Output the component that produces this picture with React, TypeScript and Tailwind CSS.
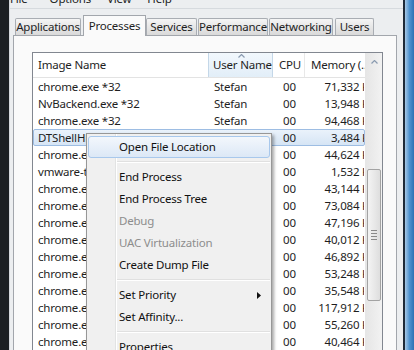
import React from "react";

type Row = { name: string; user: string; mem: string; selected?: boolean };

const rows: Row[] = [
  { name: "chrome.exe *32", user: "Stefan", mem: "71,332 K" },
  { name: "NvBackend.exe *32", user: "Stefan", mem: "13,948 K" },
  { name: "chrome.exe *32", user: "Stefan", mem: "94,468 K" },
  { name: "DTShellHlp.exe", user: "Stefan", mem: "3,484 K", selected: true },
  { name: "chrome.exe", user: "Stefan", mem: "44,624 K" },
  { name: "vmware-tray.exe", user: "Stefan", mem: "1,532 K" },
  { name: "chrome.exe", user: "Stefan", mem: "43,144 K" },
  { name: "chrome.exe", user: "Stefan", mem: "73,084 K" },
  { name: "chrome.exe", user: "Stefan", mem: "47,196 K" },
  { name: "chrome.exe", user: "Stefan", mem: "40,012 K" },
  { name: "chrome.exe", user: "Stefan", mem: "46,892 K" },
  { name: "chrome.exe", user: "Stefan", mem: "53,248 K" },
  { name: "chrome.exe", user: "Stefan", mem: "35,548 K" },
  { name: "chrome.exe", user: "Stefan", mem: "117,912 K" },
  { name: "chrome.exe", user: "Stefan", mem: "55,260 K" },
  { name: "chrome.exe", user: "Stefan", mem: "40,464 K" },
];

const tabs = [
  { label: "Applications", cls: "w-[66px]" },
  { label: "Processes", cls: "w-[63px] ml-[2px]", active: true },
  { label: "Services", cls: "w-[51px]" },
  { label: "Performance", cls: "w-[70px] ml-px" },
  { label: "Networking", cls: "w-[64px] ml-px" },
  { label: "Users", cls: "w-[39px] ml-[2px]" },
];

type MenuEntry =
  | { sep: true }
  | { label: string; hot?: boolean; disabled?: boolean; sub?: boolean; sep?: false };

const menu: MenuEntry[] = [
  { label: "Open File Location", hot: true },
  { sep: true },
  { label: "End Process" },
  { label: "End Process Tree" },
  { label: "Debug", disabled: true },
  { label: "UAC Virtualization", disabled: true },
  { label: "Create Dump File" },
  { sep: true },
  { label: "Set Priority", sub: true },
  { label: "Set Affinity..." },
  { sep: true },
  { label: "Properties" },
];

const Chevron = ({ className }: { className?: string }) => (
  <svg className={className} width="7" height="4" viewBox="0 0 7 4">
    <path d="M0.5 3.5 L3.5 0.5 L6.5 3.5" fill="none" stroke="#8a9bb0" strokeWidth="1.2" />
  </svg>
);

const ContextMenu = () => (
  <div className="absolute left-[86px] top-[133px] z-20 w-[186px] border border-[#979797] bg-[#f0f0f0] px-px py-[2px] shadow-[2px_2px_3px_rgba(0,0,0,0.35)]">
    <div className="absolute bottom-0 left-[28px] top-0 w-px bg-[#e2e3e3]" />
    <div className="absolute bottom-0 left-[29px] top-0 w-px bg-white" />
    {menu.map((m, i) =>
      m.sep ? (
        <div key={i} className="relative flex h-[8px] flex-col justify-center pl-[29px]">
          <div className="h-px bg-[#e0e0e0]" />
          <div className="h-px bg-white" />
        </div>
      ) : (
        <div
          key={i}
          className={
            m.hot
              ? "relative flex h-[22px] items-center rounded-[3px] border border-[#a8c8ec] bg-gradient-to-b from-[#f3f7fc] to-[#dce8f6] pl-[30px]"
              : "relative flex h-[22px] items-center border border-transparent pl-[30px]"
          }
        >
          <span className={m.disabled ? "text-[#8d8d8d]" : "text-[#111]"}>{m.label}</span>
          {m.sub && (
            <svg className="ml-auto mr-[8px]" width="4" height="7" viewBox="0 0 4 7">
              <path d="M0 0 L4 3.5 L0 7 Z" fill="#111" />
            </svg>
          )}
        </div>
      ),
    )}
  </div>
);

const ProcessList = () => (
  <div className="flex h-[400px] w-[351px] border border-[#828790] bg-white">
    <div className="flex w-[332px] flex-col">
      <div className="flex h-[25px] shrink-0 border-b border-[#e3e3e3] whitespace-nowrap">
        <div className="flex w-[175px] items-center pl-[5px]">Image Name</div>
        <div className="relative flex w-[65px] items-center border-x border-[#c4d7e8] bg-gradient-to-b from-[#f2f8fd] to-[#e2eef8] pl-[4px]">
          <Chevron className="absolute left-[29px] top-[1px]" />
          User Name
        </div>
        <div className="flex w-[32px] items-center border-r border-[#e8e8e8] pl-[6px]">CPU</div>
        <div className="flex w-[60px] items-center overflow-hidden pl-[6px]">Memory (..</div>
      </div>
      {rows.map((r, i) => (
        <div
          key={i}
          className={
            r.selected
              ? "flex h-[17px] shrink-0 items-center rounded-[2px] border border-[#9dbde3] bg-gradient-to-b from-[#eaf2fb] to-[#d6e5f5]"
              : "flex h-[17px] shrink-0 items-center border border-transparent"
          }
        >
          <div className="w-[174px] pl-[4px] whitespace-nowrap">{r.name}</div>
          <div className="w-[65px] pl-[6px]">{r.user}</div>
          <div className="w-[32px] pl-[10px]">00</div>
          <div className="flex w-[59px] justify-end overflow-hidden whitespace-nowrap">
            <span className="-mr-[5px]">{r.mem}</span>
          </div>
        </div>
      ))}
    </div>
    <div className="flex w-[17px] flex-col border-l border-[#e6e6e6] bg-gradient-to-r from-[#e6e6e6] to-[#f2f2f2]">
      <div className="flex h-[17px] items-center justify-center">
        <Chevron />
      </div>
      <div className="mx-px mt-[99px] flex h-[132px] flex-col items-center justify-center gap-[2px] rounded-[2px] border border-[#a3a3a3] bg-gradient-to-r from-[#f4f4f4] to-[#dedede]">
        <div className="h-px w-[6px] bg-[#8a8a8a]" />
        <div className="h-px w-[6px] bg-[#8a8a8a]" />
        <div className="h-px w-[6px] bg-[#8a8a8a]" />
        <div className="h-px w-[6px] bg-[#8a8a8a]" />
      </div>
    </div>
  </div>
);

export default function App() {
  return (
    <div className="relative flex h-[350px] w-[414px] overflow-hidden bg-[#1b1f23] font-['Noto_Sans',sans-serif] text-[11.5px] leading-[16px] tracking-[-0.2px] text-[#1e1e1e]">
      <div className="w-[9px] shrink-0 bg-[#1b1f23]" />
      <div className="flex w-[394px] shrink-0 flex-col border-l border-[#d5d9dd] bg-[#eceef0]">
        <div className="h-[9px] shrink-0 overflow-hidden border-b border-[#d6dade]">
          <div className="-mt-[9px] flex h-[16px] whitespace-nowrap">
            <span className="ml-0">File</span>
            <span className="ml-[22px]">Options</span>
            <span className="ml-[16px]">View</span>
            <span className="ml-[16px]">Help</span>
          </div>
        </div>
        <div className="flex h-[26px] shrink-0 items-end pl-[5px]">
          {tabs.map((t) => (
            <div
              key={t.label}
              className={
                t.active
                  ? `relative z-10 -mb-px flex h-[21px] items-start justify-center border border-b-0 border-[#a2a6ac] bg-[#fafafa] pt-[2px] ${t.cls}`
                  : `flex h-[17px] items-center justify-center rounded-t-[2px] border border-b-0 border-[#a9adb3] bg-gradient-to-b from-[#f5f5f5] to-[#d9d9d9] ${t.cls}`
              }
            >
              {t.label}
            </div>
          ))}
        </div>
        <div className="ml-[3px] h-[400px] w-[384px] border border-[#a2a6ac] bg-[#fafafa] pl-[18px] pt-[16px]">
          <ProcessList />
        </div>
      </div>
      <div className="w-[2px] shrink-0 bg-[#1e2a38]" />
      <div className="flex-1 bg-gradient-to-r from-[#a7c9e6] via-[#4d92cf] to-[#2c72b4]" />
      <ContextMenu />
    </div>
  );
}
